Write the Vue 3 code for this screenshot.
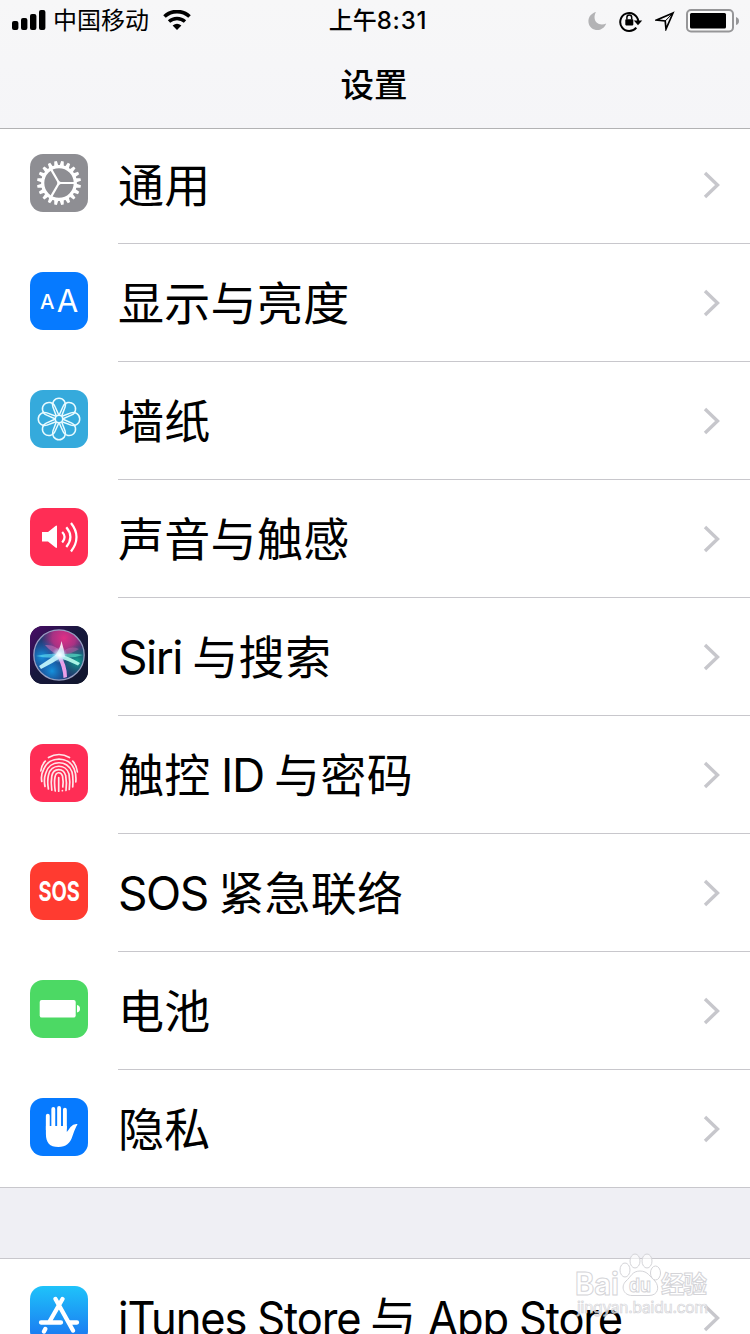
<script setup>
const rows = [
  { id: 'general', color: '#8e8e93', parts: [{ t: '通用' }] },
  { id: 'display', color: '#067aff', parts: [{ t: '显示与亮度' }] },
  { id: 'wallpaper', color: '#35aadc', parts: [{ t: '墙纸' }] },
  { id: 'sound', color: '#ff2d55', parts: [{ t: '声音与触感' }] },
  { id: 'siri', color: '#15152e', parts: [{ t: 'Siri ', latin: true }, { t: '与搜索' }] },
  { id: 'touch', color: '#ff2d55', parts: [{ t: '触控' }, { t: ' ID ', latin: true }, { t: '与密码' }] },
  { id: 'sos', color: '#ff3b30', parts: [{ t: 'SOS ', latin: true }, { t: '紧急联络' }] },
  { id: 'battery', color: '#4cd964', parts: [{ t: '电池' }] },
  { id: 'privacy', color: '#067aff', parts: [{ t: '隐私' }] },
]
const storeRows = [
  {
    id: 'store',
    color: 'transparent',
    parts: [{ t: 'iTunes Store ', latin: true }, { t: '与' }, { t: ' App Store', latin: true }],
  },
]
const groups = [rows, storeRows]
const teeth = Array.from({ length: 20 }, (_, i) => i * 18 + 9)
const petals = Array.from({ length: 8 }, (_, i) => i * 45)
</script>

<template>
  <div class="screen">
    <header class="header">
      <div class="status">
        <div class="side left">
          <svg class="signal" width="34" height="22" viewBox="0 0 34 22">
            <rect x="0" y="12" width="6.4" height="9" rx="2" />
            <rect x="9" y="9" width="6.4" height="12" rx="2" />
            <rect x="18" y="5" width="6.4" height="16" rx="2" />
            <rect x="27" y="1" width="6.4" height="20" rx="2" />
          </svg>
          <span class="carrier">中国移动</span>
          <svg class="wifi" width="28" height="20" viewBox="0 0 28 20">
            <path d="M1.500 6.500A18.200 18.200 0 0 1 26.500 6.500" fill="none" stroke="#000" stroke-width="3.700" />
            <path d="M6 11.600A11.800 11.800 0 0 1 22 11.600" fill="none" stroke="#000" stroke-width="3.400" />
            <path d="M9.600 15.500Q14 12 18.400 15.500L14 19.900Z" />
          </svg>
        </div>
        <div class="time">上午<span>8:31</span></div>
        <div class="side right">
          <svg width="19" height="20" viewBox="0 0 19 20">
            <path d="M8 1C0 3-2 12 3.500 17C8.500 21 16 19 18.200 12.500C10 16 3.500 9 8 1Z" fill="#b3b3b5" />
          </svg>
          <svg width="24" height="22" viewBox="0 0 24 22">
            <path d="M17.300 17.600A9 9 0 1 1 19.200 11" fill="none" stroke="#000" stroke-width="2" />
            <path d="M14.800 10.500H23.200L19 15.200Z" />
            <rect x="6.300" y="9.200" width="8" height="6.200" rx="0.800" />
            <path d="M7.900 9.500V7.500a2.400 2.400 0 0 1 4.800 0V9.500" fill="none" stroke="#000" stroke-width="1.500" />
          </svg>
          <svg class="arrow" width="20" height="20" viewBox="0 0 20 20">
            <path d="M18 2L1.800 9L10.200 10L11 18Z" fill="none" stroke="#000" stroke-width="1.700" />
            <path d="M18 2L10.200 10" stroke="#000" stroke-width="1" />
          </svg>
          <svg width="54" height="24" viewBox="0 0 54 24">
            <rect x="1" y="1" width="46" height="21.500" rx="4" fill="#fbfbfb" stroke="#969698" stroke-width="2" />
            <rect x="4" y="4" width="36" height="15.500" rx="1.500" />
            <path d="M50 8Q53 9 53 12Q53 15 50 16Z" fill="#969698" />
          </svg>
        </div>
      </div>
      <h1 class="title">设置</h1>
    </header>

    <main class="list">
      <section v-for="(group, g) in groups" :key="g" class="group">
        <div v-for="row in group" :key="row.id" class="row">
          <svg class="icon" viewBox="0 0 58 58" :style="{ backgroundColor: row.color }">
            <g v-if="row.id === 'general'" stroke="#fff" fill="none">
              <circle cx="29" cy="29" r="16.300" stroke-width="3.200" />
              <path
                v-for="a in teeth"
                :key="a"
                d="M26.700 13L27.700 7H30.300L31.300 13Z"
                fill="#fff"
                stroke="none"
                :transform="`rotate(${a} 29 29)`"
              />
              <path d="M29 29H45M29 29L21 15.100M29 29L21 42.900" stroke-width="2.200" />
              <circle cx="29" cy="29" r="1.800" fill="#fff" stroke="none" />
            </g>

            <g v-else-if="row.id === 'display'" class="letters">
              <text x="10" y="36.500" font-size="20.500" font-weight="500">A</text>
              <text x="26.800" y="40" font-size="31.500" font-weight="400" textLength="21.500" lengthAdjust="spacingAndGlyphs">A</text>
            </g>

            <g v-else-if="row.id === 'wallpaper'" fill="none" stroke="#e9fbff" stroke-width="1.500">
              <path
                v-for="a in petals"
                :key="a"
                d="M26.300 26L22.900 17A6.500 6.500 0 1 1 35.100 17L31.700 26"
                :transform="`rotate(${a} 29 29)`"
              />
              <circle cx="29" cy="29" r="3.700" />
            </g>

            <g v-else-if="row.id === 'sound'" fill="none" stroke="#fff">
              <path d="M12 24H18L25.500 18Q27 17 27 18.500V39Q27 40.500 25.500 39.500L18 33.500H12Z" fill="#fff" stroke="none" />
              <path d="M32.200 24Q37 29 32.200 34.500" stroke-width="2.200" />
              <path d="M36.300 19.300Q44.500 29 36.300 39" stroke-width="2.200" />
              <path d="M41 15Q52 29 41 43.500" stroke-width="2.200" />
            </g>

            <g v-else-if="row.id === 'siri'">
              <defs>
                <linearGradient id="siriTile" x1="0" y1="0" x2="1" y2="1">
                  <stop offset="0" stop-color="#4b0b68" />
                  <stop offset="0.450" stop-color="#17183d" />
                  <stop offset="1" stop-color="#10162b" />
                </linearGradient>
                <radialGradient id="siriPink">
                  <stop offset="0" stop-color="#e02f86" />
                  <stop offset="0.500" stop-color="#c93088" stop-opacity="0.800" />
                  <stop offset="1" stop-color="#b02f8a" stop-opacity="0" />
                </radialGradient>
                <radialGradient id="siriBlue">
                  <stop offset="0" stop-color="#1592dc" />
                  <stop offset="1" stop-color="#1268c6" stop-opacity="0" />
                </radialGradient>
                <radialGradient id="siriTeal">
                  <stop offset="0" stop-color="#15a592" />
                  <stop offset="1" stop-color="#0f6f79" stop-opacity="0" />
                </radialGradient>
                <radialGradient id="siriGlow">
                  <stop offset="0" stop-color="#fff" />
                  <stop offset="0.350" stop-color="#dff6ff" stop-opacity="0.850" />
                  <stop offset="1" stop-color="#8fd6ff" stop-opacity="0" />
                </radialGradient>
                <clipPath id="siriClip"><circle cx="29" cy="29" r="25" /></clipPath>
              </defs>
              <rect width="58" height="58" fill="url(#siriTile)" />
              <g clip-path="url(#siriClip)">
                <circle cx="29" cy="29" r="25" fill="#23386f" />
                <circle cx="34" cy="12" r="23" fill="url(#siriPink)" />
                <circle cx="12" cy="31" r="18" fill="url(#siriBlue)" />
                <circle cx="22" cy="45" r="18" fill="url(#siriBlue)" />
                <circle cx="47" cy="35" r="17" fill="url(#siriTeal)" />
                <path d="M29 30Q20 25 15 19Q26 18 33 28Z" fill="#f27cc0" opacity="0.450" />
                <path d="M29 30Q38 18 49 23Q42 28 29 30Z" fill="#d26bb4" opacity="0.400" />
                <path d="M31 28Q18 27 6 30Q18 33 31 31Z" fill="#5bd9ef" opacity="0.700" />
                <path d="M27 29Q42 26 53 29Q42 33 27 31Z" fill="#5ef0d0" opacity="0.600" />
                <path d="M30 26L9 40L11 43Q23 37 32 31Z" fill="#c9fbff" opacity="0.900" />
                <path d="M27 27Q40 31 50 37L48 39.500Q39 35 27 31Z" fill="#b9fff0" opacity="0.900" />
                <path d="M29 27Q37 38 37 51L33.500 52Q33 41 27 30Z" fill="#f4a4ec" opacity="0.950" />
                <path d="M25 30Q30 23 31.500 15Q34 23 35 31Z" fill="#fff" opacity="0.850" />
                <circle cx="29.500" cy="29" r="8" fill="url(#siriGlow)" />
              </g>
              <circle cx="29" cy="29" r="25.200" fill="none" stroke="#aab4d6" stroke-width="1.300" opacity="0.850" />
            </g>

            <g v-else-if="row.id === 'touch'" fill="none" stroke="#ffe6e9" stroke-width="1.700" stroke-linecap="round">
              <path d="M18.500 13.500Q29 7.500 39.500 13.500" />
              <path d="M10.800 27Q11.500 21 15.300 17.200M42.700 17.200Q46.500 21 47.400 28" />
              <path d="M11.800 37.500Q10.500 31 13.800 25C19 11.800 39 11.800 44.200 25Q46.500 31 45.800 38" />
              <path d="M15 42.500Q13.500 35 15.800 29C19.500 15.500 38 15.500 42 28Q43.500 34 42.700 43" />
              <path d="M18.400 45Q17 37 18.500 31C21 19.500 36 19.500 39 30Q40.400 38 39.300 45.500" />
              <path d="M21.800 46.200Q20.700 38 21.800 32C23.500 23.500 33.500 23.500 35.700 31.500Q37 39 36 46.500" />
              <path d="M25.200 47Q24 38 25 33C26 27.500 31 27.500 32.500 32Q33.600 38 32.800 43" />
              <path d="M28.700 47.200V33.500M32.400 46.500V46.700" />
            </g>

            <g v-else-if="row.id === 'sos'" class="letters">
              <text x="8.400" y="38.500" font-size="27" font-weight="700" textLength="41.500" lengthAdjust="spacingAndGlyphs">SOS</text>
            </g>

            <g v-else-if="row.id === 'battery'" fill="#fff">
              <rect x="9.700" y="20" width="36" height="17.500" rx="2" />
              <path d="M47 25Q50 25.500 50 28.800Q50 32 47 32.500Z" />
            </g>

            <g v-else-if="row.id === 'privacy'" fill="none" stroke="#fff" stroke-width="3.900" stroke-linecap="round">
              <path d="M17.800 17.800V32M23.300 11V30M29.100 9.900V30M34.900 11.700V30" />
              <path
                d="M15.900 28H36.800V34Q38.500 32 40.500 29Q43.500 25.500 47.200 26Q48 26.400 46.500 28Q44.500 32 42.500 38C40 45.500 36 49 28.500 49C19.500 49 15.900 44.500 15.900 36Z"
                fill="#fff"
                stroke="none"
              />
            </g>

            <g v-else>
              <defs>
                <linearGradient id="storeTile" x1="0" y1="0" x2="0" y2="1">
                  <stop offset="0" stop-color="#1fc3fa" />
                  <stop offset="1" stop-color="#1a70f0" />
                </linearGradient>
              </defs>
              <rect width="58" height="58" fill="url(#storeTile)" />
              <g fill="none" stroke="#fff" stroke-width="4.300" stroke-linecap="round">
                <path d="M32.500 13L19 36.500M15.300 43L14 45.500M25.500 13L43 44.500M11 36.500H31M40 36.500H47" />
              </g>
            </g>
          </svg>
          <div class="body">
            <span class="label"><span v-for="(p, i) in row.parts" :key="i" :class="p.latin ? 'latin' : 'han'">{{ p.t }}</span></span>
            <svg class="chevron" width="18" height="28" viewBox="0 0 18 28">
              <path d="M2 2L14.500 14L2 26" fill="none" stroke="#c7c7cc" stroke-width="3.400" />
            </svg>
          </div>
        </div>
      </section>
    </main>

    <svg class="watermark" width="146" height="80" viewBox="0 0 146 80">
      <g fill="#fff" fill-opacity="0.600" stroke="#d4d4d8" stroke-width="1">
        <ellipse cx="55" cy="34" rx="5" ry="7" />
        <ellipse cx="65" cy="25" rx="5" ry="7" />
        <ellipse cx="77" cy="25" rx="5" ry="7" />
        <ellipse cx="85.500" cy="37" rx="5" ry="7" />
        <path d="M70 35C62 35 61 41 56 45C50 51 54 59.500 62 59.500H79C88 59.500 90 51 85 45C80 41 78 35 70 35Z" />
      </g>
      <g class="mark">
        <text x="5" y="59" font-size="31" textLength="44" lengthAdjust="spacingAndGlyphs">Bai</text>
        <text x="59" y="56" font-size="19" textLength="22" lengthAdjust="spacingAndGlyphs">du</text>
        <text x="91" y="57" font-size="23.500" textLength="46" class="mark-han">经验</text>
        <text x="7" y="77" font-size="15.500" textLength="131" class="mark-url">jingyan.baidu.com</text>
      </g>
    </svg>
  </div>
</template>

<style>
html,
body {
  margin: 0;
  background: #efeff4;
}
</style>

<style scoped>
.screen {
  position: relative;
  display: flex;
  flex-direction: column;
  width: 750px;
  height: 1334px;
  overflow: hidden;
  background: #efeff4;
  color: #000;
  font-family: Inter, "Noto Sans CJK SC", sans-serif;
}
.header {
  position: relative;
  z-index: 1;
  flex: none;
  box-sizing: border-box;
  height: 129px;
  border-bottom: 1px solid #b2b2b4;
  background: linear-gradient(#f7f7f8, #f5f5f8);
}
.status {
  display: grid;
  grid-template-columns: 1fr auto 1fr;
  align-items: center;
  height: 40px;
  padding: 1px 10px 0 12px;
}
.side {
  display: flex;
  align-items: center;
}
.right {
  justify-content: flex-end;
  gap: 12px;
}
.right svg {
  margin-top: -1px;
}
.signal {
  margin-top: -2px;
}
.wifi {
  margin-top: -2px;
}
.arrow {
  margin-right: -1px;
}
.carrier {
  margin: 0 14px 0 7px;
  font-size: 24px;
  line-height: 40px;
}
.time {
  padding-left: 4px;
  font-size: 24px;
  font-weight: 500;
  line-height: 40px;
}
.time span {
  letter-spacing: 0.800px;
}
.title {
  margin: 0;
  padding-top: 20px;
  padding-right: 2px;
  text-align: center;
  font-size: 33.500px;
  font-weight: 500;
  line-height: 48px;
}
.list {
  display: flex;
  flex-direction: column;
  gap: 70px;
  margin-top: -3px;
}
.group {
  border-bottom: 1px solid #c8c7cc;
  background: #fff;
}
.group + .group {
  border-top: 1px solid #c8c7cc;
}
.row {
  display: flex;
  height: 118px;
  padding-left: 30px;
}
.row:last-child {
  height: 117px;
}
.icon {
  flex: none;
  width: 58px;
  height: 58px;
  margin: 28px 30px 0 0;
  border-radius: 13px;
}
.group + .group .icon {
  margin-top: 27px;
}
.letters {
  fill: #fff;
  font-family: Inter, sans-serif;
}
.body {
  display: flex;
  flex: 1;
  align-items: center;
  justify-content: space-between;
  box-sizing: border-box;
  padding-right: 29px;
  border-bottom: 1px solid #c8c7cc;
}
.row:last-child .body {
  border-bottom: 0;
}
.label {
  white-space: pre;
  font-size: 46px;
  line-height: 60px;
}
.han {
  letter-spacing: 0.300px;
}
.latin {
  letter-spacing: -1.500px;
  word-spacing: -1px;
}
.group + .group .latin {
  display: inline-block;
  margin-right: -16px;
  letter-spacing: -1.200px;
  word-spacing: 0;
  transform: scaleX(0.945);
  transform-origin: left;
}
.group + .group .chevron {
  margin-top: 0;
}
.chevron {
  margin-top: 1px;
}
.watermark {
  position: absolute;
  left: 570px;
  top: 1236px;
  overflow: visible;
}
.mark {
  fill: #fff;
  fill-opacity: 0.600;
  stroke: #d4d4d8;
  stroke-width: 1px;
  font-family: Inter, sans-serif;
  font-weight: 700;
}
.mark-han {
  font-family: "Noto Sans CJK SC", sans-serif;
}
.mark-url {
  font-weight: 400;
  stroke-width: 0.700px;
}
</style>
